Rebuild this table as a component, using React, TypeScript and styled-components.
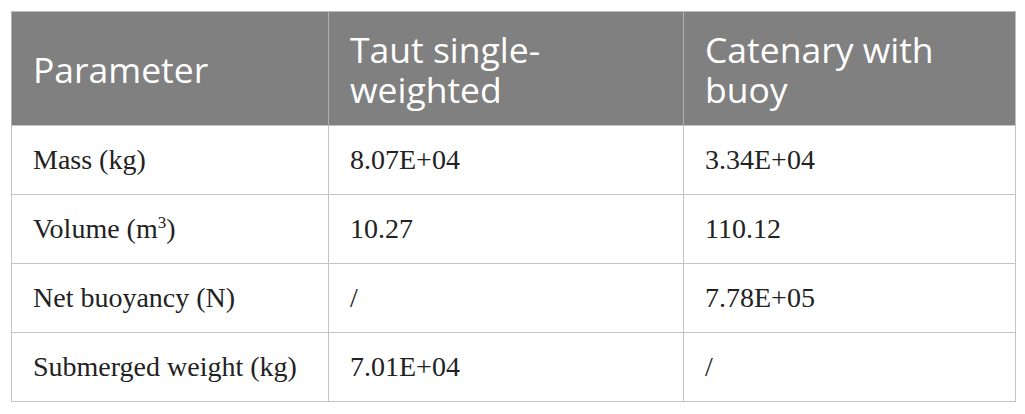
import React from 'react';
import styled, { createGlobalStyle } from 'styled-components';

const GlobalStyle = createGlobalStyle`
  html, body {
    margin: 0;
    padding: 0;
    background: #ffffff;
  }
`;

const Page = styled.div`
  padding: 11px 0 0 11px;
`;

const Table = styled.table`
  width: 1004px;
  border-collapse: collapse;
  table-layout: fixed;
  border: 1px solid #bfbfbf;
`;

const HeadCell = styled.th<{ $width: number }>`
  width: ${(p) => p.$width}px;
  height: 114px;
  box-sizing: border-box;
  padding: 0 16px 0 21px;
  background: #808080;
  color: #ffffff;
  font-family: 'Open Sans', 'Lato', sans-serif;
  font-weight: 400;
  font-size: 35.5px;
  line-height: 40px;
  text-align: left;
  vertical-align: middle;
  border-left: 1px solid #b0b0b0;
`;

const Row = styled.tr`
  height: 69px;
`;

const Cell = styled.td`
  box-sizing: border-box;
  padding: 0 16px 0 21px;
  border: 1px solid #c4c4c4;
  color: #222222;
  font-family: 'Liberation Serif', 'Times New Roman', serif;
  font-size: 28px;
  vertical-align: middle;

  sup {
    font-size: 17px;
    line-height: 0;
  }
`;

const rows: [React.ReactNode, string, string][] = [
  ['Mass (kg)', '8.07E+04', '3.34E+04'],
  [<>Volume (m<sup>3</sup>)</>, '10.27', '110.12'],
  ['Net buoyancy (N)', '/', '7.78E+05'],
  ['Submerged weight (kg)', '7.01E+04', '/'],
];

export default function App() {
  return (
    <Page>
      <GlobalStyle />
      <Table>
        <thead>
          <tr>
            <HeadCell $width={317}>Parameter</HeadCell>
            <HeadCell $width={355}>Taut single-<br />weighted</HeadCell>
            <HeadCell $width={332}>Catenary with<br />buoy</HeadCell>
          </tr>
        </thead>
        <tbody>
          {rows.map((r, i) => (
            <Row key={i}>
              <Cell>{r[0]}</Cell>
              <Cell>{r[1]}</Cell>
              <Cell>{r[2]}</Cell>
            </Row>
          ))}
        </tbody>
      </Table>
    </Page>
  );
}
